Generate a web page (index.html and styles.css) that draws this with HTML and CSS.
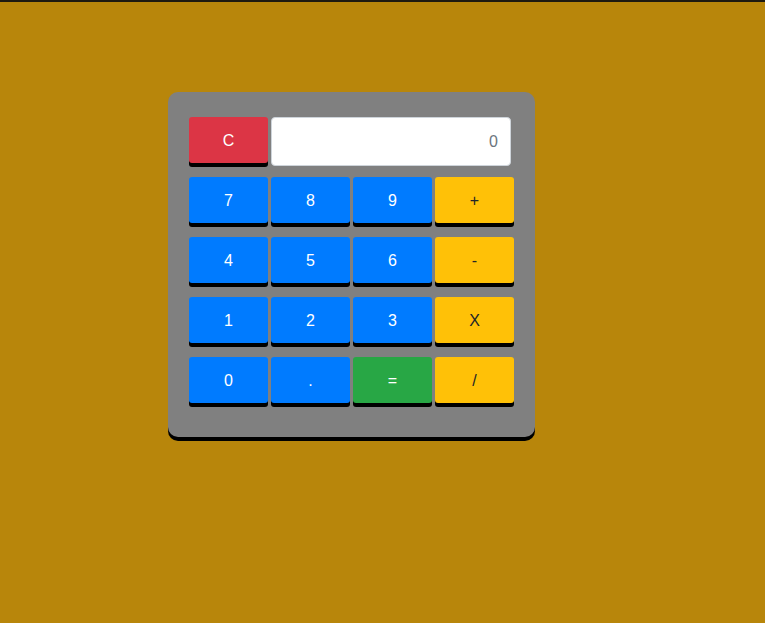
FILE: index.html
```html
<!DOCTYPE html>
<html>
<head>
<meta charset="utf-8">
<link rel="stylesheet" href="styles.css">
</head>
<body>
<div class="page">
  <div class="calc">
    <div class="row">
      <button class="btn red">C</button>
      <div class="display">0</div>
    </div>
    <div class="row">
      <button class="btn blue">7</button>
      <button class="btn blue">8</button>
      <button class="btn blue">9</button>
      <button class="btn yellow">+</button>
    </div>
    <div class="row">
      <button class="btn blue">4</button>
      <button class="btn blue">5</button>
      <button class="btn blue">6</button>
      <button class="btn yellow">-</button>
    </div>
    <div class="row">
      <button class="btn blue">1</button>
      <button class="btn blue">2</button>
      <button class="btn blue">3</button>
      <button class="btn yellow">X</button>
    </div>
    <div class="row">
      <button class="btn blue">0</button>
      <button class="btn blue">.</button>
      <button class="btn green">=</button>
      <button class="btn yellow">/</button>
    </div>
  </div>
</div>
</body>
</html>
```
FILE: styles.css
```css
html, body {
  margin: 0;
  padding: 0;
  height: 100%;
}
body {
  background: #b8860b;
  border-top: 2px solid #1e1a10;
  box-sizing: border-box;
  font-family: "Liberation Sans", Arial, sans-serif;
}
.page {
  padding: 90px 0 0 168px;
}
.calc {
  width: 325px;
  background: #808080;
  border-radius: 10px;
  padding: 25px 21px 30px 21px;
  box-shadow: 0 4px 0 #000;
  display: flex;
  flex-direction: column;
  gap: 10px;
}
.row {
  display: flex;
  gap: 3px;
}
.btn {
  width: 79px;
  height: 46px;
  margin-bottom: 4px;
  border: none;
  border-radius: 3px;
  box-shadow: 0 4px 0 #000;
  font-family: "Liberation Sans", Arial, sans-serif;
  font-size: 16px;
  color: #fff;
  padding: 2px 0 0;
  text-align: center;
}
.blue { background: #007bff; }
.red { background: #dc3545; }
.green { background: #28a745; }
.yellow { background: #ffc107; color: #212529; }
.display {
  width: 240px;
  height: 49px;
  box-sizing: border-box;
  background: #fff;
  border: 1px solid #ced4da;
  border-radius: 4px;
  text-align: right;
  padding: 0 12px;
  line-height: 48px;
  font-size: 16px;
  color: #6c757d;
}
```
